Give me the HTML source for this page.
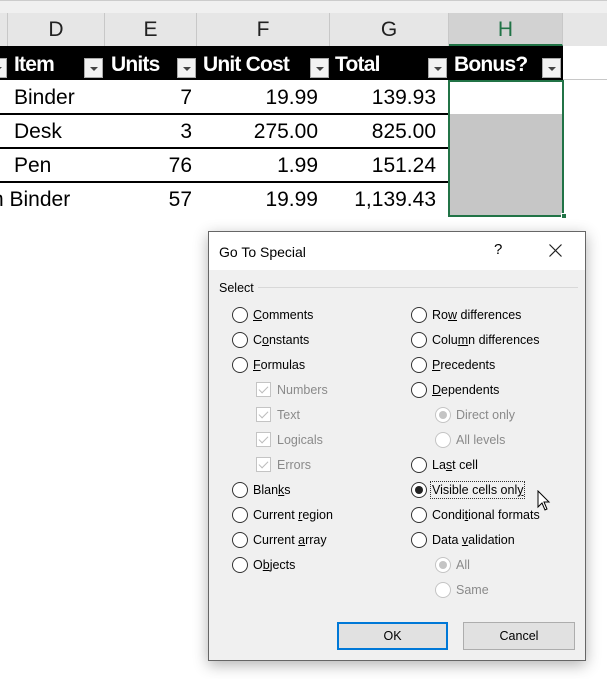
<!DOCTYPE html><html><head><style>
*{margin:0;padding:0;box-sizing:border-box}
body{width:607px;height:679px;background:#fff;position:relative;overflow:hidden;font-family:"Liberation Sans",sans-serif}
.a{position:absolute;white-space:nowrap}
.ch{position:absolute;top:13px;height:33px;background:#e6e6e6;border-right:1px solid #c8c8c8;font-size:21px;color:#222;text-align:center;line-height:34px}
.hd{position:absolute;top:53px;color:#fff;font-weight:bold;font-size:21px;letter-spacing:-0.8px;white-space:nowrap}
.dd{position:absolute;top:58px;width:19px;height:20px;background:#f2f2f2;border:1px solid #aaa}
.dd:after{content:"";position:absolute;left:5px;top:8px;border-left:4px solid transparent;border-right:4px solid transparent;border-top:4px solid #444}
.c{position:absolute;font-size:21px;color:#000;line-height:34px;white-space:nowrap}
.r{text-align:right}
.ln{position:absolute;left:0;width:449px;height:2px;background:#000}
.dl{font-family:"Liberation Sans",sans-serif;font-size:12.5px;color:#000}
.rb{position:absolute;width:16px;height:16px;border:1px solid #333;border-radius:50%;background:#fff}
.rb.g{border-color:#c4c4c4}
.t{position:absolute;font-size:12.5px;line-height:14px;white-space:nowrap}
.cb{position:absolute;width:15px;height:15px;border:1px solid #c4c4c4;background:#fff}
.cb:after{content:"";position:absolute;left:4px;top:1px;width:4px;height:8px;border-right:1px solid #bbb;border-bottom:1px solid #bbb;transform:rotate(45deg)}
u{text-decoration:underline}
</style></head><body>
<div class="a" style="left:0;top:0;width:607px;height:13px;background:#f0f0f0;border-top:1px solid #ccc"></div>
<div class="ch" style="left:0;width:8px"></div>
<div class="ch" style="left:8px;width:97px">D</div>
<div class="ch" style="left:105px;width:92px">E</div>
<div class="ch" style="left:197px;width:133px">F</div>
<div class="ch" style="left:330px;width:119px">G</div>
<div class="ch" style="left:449px;width:114px;background:#d2d2d2;color:#217346;border-bottom:2px solid #217346">H</div>
<div class="ch" style="left:563px;width:44px;border:0"></div>
<div class="a" style="left:0;top:46px;width:563px;height:34px;background:#000"></div>
<div class="a" style="left:563px;top:79px;width:44px;height:1px;background:#c8c8c8"></div>
<div class="dd" style="left:-12px"></div>
<div class="hd" style="left:14px">Item</div><div class="dd" style="left:84px"></div>
<div class="hd" style="left:111px">Units</div><div class="dd" style="left:177px"></div>
<div class="hd" style="left:203px">Unit Cost</div><div class="dd" style="left:310px"></div>
<div class="hd" style="left:335px">Total</div><div class="dd" style="left:428px"></div>
<div class="hd" style="left:454px">Bonus?</div><div class="dd" style="left:542px"></div>
<div class="ln" style="top:113px"></div><div class="ln" style="top:147px"></div><div class="ln" style="top:181px"></div>
<div class="c" style="left:14px;top:81px">Binder</div><div class="c r" style="left:100px;width:92px;top:81px">7</div><div class="c r" style="left:200px;width:118px;top:81px">19.99</div><div class="c r" style="left:330px;width:106px;top:81px">139.93</div>
<div class="c" style="left:14px;top:115px">Desk</div><div class="c r" style="left:100px;width:92px;top:115px">3</div><div class="c r" style="left:200px;width:118px;top:115px">275.00</div><div class="c r" style="left:330px;width:106px;top:115px">825.00</div>
<div class="c" style="left:14px;top:149px">Pen</div><div class="c r" style="left:100px;width:92px;top:149px">76</div><div class="c r" style="left:200px;width:118px;top:149px">1.99</div><div class="c r" style="left:330px;width:106px;top:149px">151.24</div>
<div class="c" style="left:-8px;top:183px">n Binder</div><div class="c r" style="left:100px;width:92px;top:183px">57</div><div class="c r" style="left:200px;width:118px;top:183px">19.99</div><div class="c r" style="left:320px;width:116px;top:183px">1,139.43</div>
<div class="a" style="left:449px;top:114px;width:114px;height:102px;background:#c6c6c6"></div>
<div class="a" style="left:448px;top:80px;width:116px;height:137px;border:2px solid #217346"></div>
<div class="a" style="left:561px;top:213px;width:6px;height:6px;background:#217346;border:1px solid #fff"></div>

<div class="a dl" style="left:208px;top:231px;width:378px;height:430px;background:#f0f0f0;border:1px solid #666;box-shadow:0 4px 14px rgba(0,0,0,.3)">
<div class="a" style="left:0;top:0;width:376px;height:38px;background:#fff"></div>
<div class="t" style="left:10px;top:12px;font-size:14px;line-height:16px">Go To Special</div>
<div class="t" style="left:285px;top:11px;font-size:15px">?</div>
<svg class="a" style="left:340px;top:12px" width="13" height="13" viewBox="0 0 13 13"><path d="M0.5 0.5L12.5 12.5M12.5 0.5L0.5 12.5" stroke="#222" stroke-width="1.2"/></svg>
<div class="t" style="left:10px;top:49px">Select</div>
<div class="a" style="left:49px;top:55px;width:320px;height:1px;background:#d8d8d8"></div>
</div>
<div class="a dl">
<div class="rb" style="left:232px;top:307px"></div><div class="t" style="left:253px;top:308px"><u>C</u>omments</div>
<div class="rb" style="left:232px;top:332px"></div><div class="t" style="left:253px;top:333px">C<u>o</u>nstants</div>
<div class="rb" style="left:232px;top:357px"></div><div class="t" style="left:253px;top:358px"><u>F</u>ormulas</div>
<div class="cb" style="left:256px;top:382px"></div><div class="t" style="left:277px;top:383px;color:#8a8a8a">Numbers</div>
<div class="cb" style="left:256px;top:407px"></div><div class="t" style="left:277px;top:408px;color:#8a8a8a">Text</div>
<div class="cb" style="left:256px;top:432px"></div><div class="t" style="left:277px;top:433px;color:#8a8a8a">Logicals</div>
<div class="cb" style="left:256px;top:457px"></div><div class="t" style="left:277px;top:458px;color:#8a8a8a">Errors</div>
<div class="rb" style="left:232px;top:482px"></div><div class="t" style="left:253px;top:483px">Blan<u>k</u>s</div>
<div class="rb" style="left:232px;top:507px"></div><div class="t" style="left:253px;top:508px">Current <u>r</u>egion</div>
<div class="rb" style="left:232px;top:532px"></div><div class="t" style="left:253px;top:533px">Current <u>a</u>rray</div>
<div class="rb" style="left:232px;top:557px"></div><div class="t" style="left:253px;top:558px">O<u>b</u>jects</div>

<div class="rb" style="left:411px;top:307px"></div><div class="t" style="left:432px;top:308px">Ro<u>w</u> differences</div>
<div class="rb" style="left:411px;top:332px"></div><div class="t" style="left:432px;top:333px">Colu<u>m</u>n differences</div>
<div class="rb" style="left:411px;top:357px"></div><div class="t" style="left:432px;top:358px"><u>P</u>recedents</div>
<div class="rb" style="left:411px;top:382px"></div><div class="t" style="left:432px;top:383px"><u>D</u>ependents</div>
<div class="rb g" style="left:435px;top:407px"><div class="a" style="left:3px;top:3px;width:8px;height:8px;border-radius:50%;background:#c4c4c4"></div></div><div class="t" style="left:456px;top:408px;color:#8a8a8a">Direct only</div>
<div class="rb g" style="left:435px;top:432px"></div><div class="t" style="left:456px;top:433px;color:#8a8a8a">All levels</div>
<div class="rb" style="left:411px;top:457px"></div><div class="t" style="left:432px;top:458px">La<u>s</u>t cell</div>
<div class="rb" style="left:411px;top:482px"><div class="a" style="left:3px;top:3px;width:8px;height:8px;border-radius:50%;background:#222"></div></div><div class="t" style="left:430px;top:481px;padding:1px 1px;border:1px dotted #333">Visible cells onl<u>y</u></div>
<div class="rb" style="left:411px;top:507px"></div><div class="t" style="left:432px;top:508px">Condi<u>t</u>ional formats</div>
<div class="rb" style="left:411px;top:532px"></div><div class="t" style="left:432px;top:533px">Data <u>v</u>alidation</div>
<div class="rb g" style="left:435px;top:557px"><div class="a" style="left:3px;top:3px;width:8px;height:8px;border-radius:50%;background:#c4c4c4"></div></div><div class="t" style="left:456px;top:558px;color:#8a8a8a">All</div>
<div class="rb g" style="left:435px;top:582px"></div><div class="t" style="left:456px;top:583px;color:#8a8a8a">Same</div>

<div class="a" style="left:337px;top:622px;width:111px;height:28px;background:#e1e1e1;border:2px solid #0078d7;text-align:center;line-height:24px">OK</div>
<div class="a" style="left:463px;top:622px;width:112px;height:28px;background:#e1e1e1;border:1px solid #adadad;text-align:center;line-height:26px">Cancel</div>
<svg class="a" style="left:537px;top:490px" width="14" height="22" viewBox="0 0 14 22"><path d="M1 1 L1 17 L5 13 L8 20 L10 19 L7 12 L12 12 Z" fill="#fff" stroke="#000" stroke-width="1"/></svg>
</div>
</body></html>
